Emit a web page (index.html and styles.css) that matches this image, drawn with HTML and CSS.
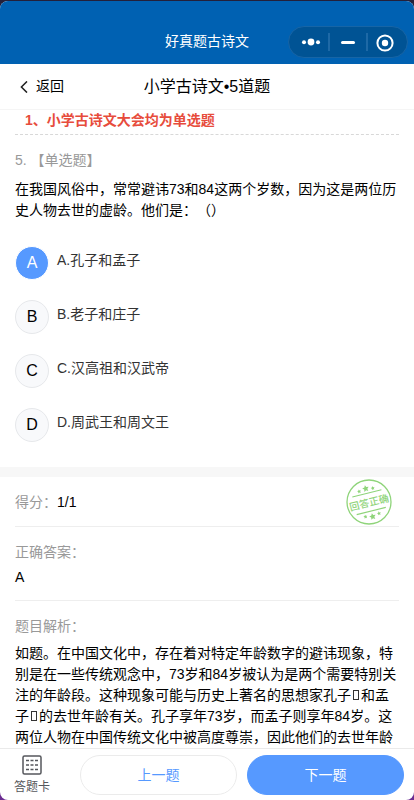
FILE: index.html
```html
<!DOCTYPE html>
<html lang="zh-CN">
<head>
<meta charset="utf-8">
<title>好真题古诗文</title>
<link rel="stylesheet" href="styles.css">
</head>
<body>
<div class="app">
  <header class="bar">
    <h1 class="bar-title">好真题古诗文</h1>
    <div class="capsule">
      <svg width="120" height="32" viewBox="0 0 120 32">
        <rect x=".5" y=".5" width="119" height="31" rx="15.500" fill="#005394" stroke="#1765a6"/>
        <path d="M41 7v18M79 7v18" stroke="#2870ad" stroke-width="1.500"/>
        <g fill="#fff"><circle cx="16" cy="16.200" r="2"/><circle cx="23" cy="16" r="3.400"/><circle cx="30" cy="16.200" r="2"/></g>
        <path d="M54.500 16.500h11" stroke="#fff" stroke-width="3" stroke-linecap="round"/>
        <circle cx="97" cy="17" r="7.600" fill="none" stroke="#fff" stroke-width="2"/>
        <circle cx="97" cy="17" r="3.200" fill="#fff"/>
      </svg>
    </div>
  </header>
  <nav class="nav">
    <a class="back"><svg width="8" height="12" viewBox="0 0 8 12"><path d="M7 .4L1.400 6 7 11.600" fill="none" stroke="#222" stroke-width="1.500"/></svg><span>返回</span></a>
    <h2 class="nav-title">小学古诗文•5道题</h2>
  </nav>
  <main class="content">
    <section class="question">
      <p class="tip">1、小学古诗文大会均为单选题</p>
      <p class="kind">5. 【单选题】</p>
      <p class="text">在我国风俗中，常常避讳73和84这两个岁数，因为这是两位历<br>史人物去世的虚龄。他们是：（）</p>
      <ul class="options">
        <li><span class="letter chosen">A</span><span class="label">A.孔子和孟子</span></li>
        <li><span class="letter">B</span><span class="label">B.老子和庄子</span></li>
        <li><span class="letter">C</span><span class="label">C.汉高祖和汉武帝</span></li>
        <li><span class="letter">D</span><span class="label">D.周武王和周文王</span></li>
      </ul>
    </section>
    <section class="result">
      <div class="score"><span class="muted">得分：</span>1/1
        <svg class="stamp" width="46" height="46" viewBox="0 0 46 46">
          <circle cx="23" cy="23" r="22" fill="none" stroke="#8fd47a" stroke-width="1.300"/>
          <g transform="rotate(-14 23 23)">
            <path d="M8 14.200h30M8 32.300h30" stroke="#8fd47a" stroke-width="1.100"/>
            <text class="stamp-text" x="23" y="27.200" text-anchor="middle">回答正确</text>
            <g fill="#8fd47a">
              <path d="M23 5.800l1 2.100 2.300.3-1.700 1.600.4 2.300-2-1.100-2 1.100.4-2.300-1.700-1.600 2.300-.3z"/>
              <path d="M16 8.300l.6 1.300 1.400.2-1 1 .2 1.400-1.200-.7-1.200.7.2-1.400-1-1 1.400-.2zM30 8.300l.6 1.300 1.400.2-1 1 .2 1.400-1.200-.7-1.200.7.2-1.400-1-1 1.400-.2zM16 34.300l.6 1.300 1.400.2-1 1 .2 1.400-1.200-.7-1.200.7.2-1.400-1-1 1.400-.2zM30 34.300l.6 1.300 1.400.2-1 1 .2 1.400-1.200-.7-1.200.7.2-1.400-1-1 1.400-.2z"/>
              <path d="M23 34.600l1 2.100 2.300.3-1.700 1.600.4 2.300-2-1.100-2 1.100.4-2.300-1.700-1.600 2.300-.3z"/>
            </g>
          </g>
        </svg>
      </div>
      <div class="answer"><p class="muted">正确答案：</p><p class="value">A</p></div>
      <div class="analysis">
        <p class="muted">题目解析：</p>
        <p class="text">如题。在中国文化中，存在着对特定年龄数字的避讳现象，特<br>别是在一些传统观念中，73岁和84岁被认为是两个需要特别关<br>注的年龄段。这种现象可能与历史上著名的思想家孔子<i class="box"></i>和孟<br>子<i class="box"></i>的去世年龄有关。孔子享年73岁，而孟子则享年84岁。这<br>两位人物在中国传统文化中被高度尊崇，因此他们的去世年龄</p>
      </div>
    </section>
  </main>
  <footer class="footer">
    <a class="card">
      <svg width="20" height="20" viewBox="0 0 20 20" fill="none" stroke="#55575c"><rect x="1" y="1" width="18" height="18" rx="1.500" stroke-width="1.500"/><path d="M4 5.500h3m1.500 0h3m1.500 0h3M4 10h3m1.500 0h3m1.500 0h3M4 14.500h3m1.500 0h3m1.500 0h3" stroke-width="1.400"/></svg>
      <span>答题卡</span>
    </a>
    <button class="btn">上一题</button>
    <button class="btn primary">下一题</button>
  </footer>
</div>
</body>
</html>
```
FILE: styles.css
```css
* { box-sizing: border-box; margin: 0; padding: 0; }
body {
  width: 414px;
  height: 800px;
  overflow: hidden;
  background: linear-gradient(#23203a, #6b2c91);
  font: 14px/21px "Liberation Sans", "Noto Sans CJK SC", sans-serif;
  text-spacing-trim: space-all;
  color: #000;
}
.app {
  display: flex;
  flex-direction: column;
  height: 799px;
  margin-top: 1px;
  border-radius: 8px;
  overflow: hidden;
  background: #fff;
}
.bar {
  position: relative;
  flex: none;
  height: 63px;
  padding-top: 30px;
  background: #0061b2;
  text-align: center;
}
.bar-title { font-size: 14px; font-weight: 400; color: #fff; }
.capsule { position: absolute; left: 288px; top: 25px; height: 32px; }
.capsule svg { display: block; }
.nav {
  display: grid;
  grid-template-columns: 100px 1fr 100px;
  align-items: center;
  flex: none;
  height: 46px;
  border-bottom: 1px solid #f5f5f5;
}
.back { display: flex; align-items: center; gap: 8px; padding-left: 20px; }
.nav-title { font-size: 16px; font-weight: 400; text-align: center; white-space: nowrap; }
.content { flex: 1; min-height: 0; overflow: hidden; }
.question { height: 357px; padding: 0 15px; }
.tip {
  height: 25px;
  padding-left: 10px;
  border-bottom: 1px dashed #d8d8d8;
  font-weight: 700;
  color: #e74c3c;
}
.kind { margin-top: 15px; color: #999; }
.text { white-space: nowrap; }
.question .text { margin-top: 8px; }
.options { margin-top: 25px; list-style: none; }
.options li { display: flex; gap: 8px; height: 54px; }
.letter {
  width: 34px;
  height: 34px;
  border: 1px solid #e6e8eb;
  border-radius: 50%;
  background: #f8f9fb;
  font-size: 16px;
  line-height: 32px;
  text-align: center;
}
.chosen { border-color: #fff; background: #5699ff; color: #fff; }
.label { padding-top: 4px; color: #333; }
.muted { color: #999; }
.result { padding: 0 15px; border-top: 10px solid #f7f7f7; }
.score { position: relative; height: 50px; padding-top: 15px; border-bottom: 1px solid #eee; }
.stamp { position: absolute; left: 331px; top: 2px; }
.stamp-text { font-size: 10px; font-weight: 500; fill: #8fd47a; }
.answer { height: 74px; padding-top: 15px; border-bottom: 1px solid #eee; }
.value { margin-top: 4px; }
.analysis { padding-top: 15px; }
.analysis .text { margin-top: 6px; }
.box {
  display: inline-block;
  width: 6px;
  height: 10px;
  margin: 0 2px;
  border: 1px solid #333;
}
.footer {
  display: flex;
  flex: none;
  height: 52px;
  padding: 6px 10px 0 0;
  border-top: 1px solid #eaeaea;
}
.card {
  display: flex;
  flex-direction: column;
  align-items: center;
  width: 64px;
  margin-right: 16px;
  font-size: 12px;
  line-height: 18px;
  color: #55575c;
}
.card svg { margin-bottom: 3px; }
.btn {
  width: 157px;
  height: 40px;
  margin-right: 10px;
  border: 1px solid #ebebeb;
  border-radius: 20px;
  background: #fff;
  font: inherit;
  color: #5699ff;
}
.primary { margin: 0; border-color: #5699ff; background: #5699ff; color: #fff; }
```
